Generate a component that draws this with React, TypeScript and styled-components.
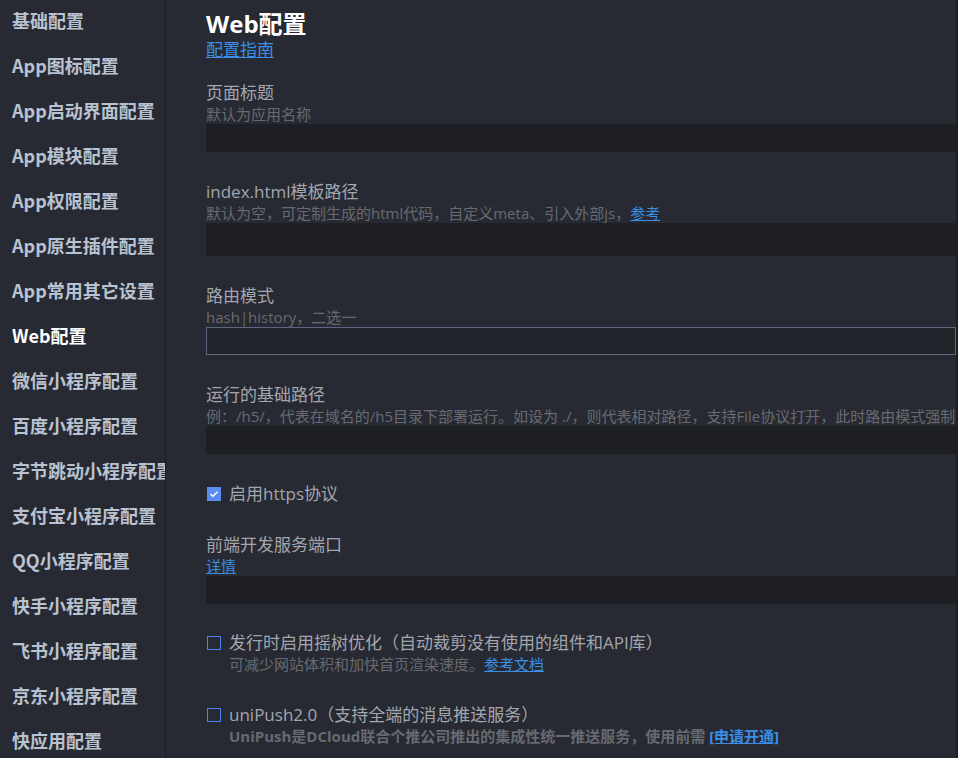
import React from "react";
import styled, { createGlobalStyle } from "styled-components";

const GlobalStyle = createGlobalStyle`
  html, body {
    margin: 0;
    padding: 0;
    background: #272a33;
    overflow: hidden;
  }
  body {
    font-family: "Open Sans", "Noto Sans CJK SC", sans-serif;
  }
  * { box-sizing: border-box; }
`;

const Page = styled.div`
  display: flex;
  width: 958px;
  height: 758px;
  background: #272a33;
  overflow: hidden;
`;

const Sidebar = styled.nav`
  flex: 0 0 166px;
  width: 166px;
  border-right: 1px solid #1b1d22;
  overflow: hidden;
  display: flex;
  flex-direction: column;
`;

const NavItem = styled.div<{ $active?: boolean }>`
  flex: 0 0 auto;
  height: 45px;
  line-height: 40px;
  padding-left: 12px;
  white-space: nowrap;
  font-size: 18px;
  font-weight: 700;
  font-family: "Noto Sans CJK SC", sans-serif;
  color: ${(p) => (p.$active ? "#ffffff" : "#b9c2d0")};
`;

const Main = styled.main`
  flex: 1 1 auto;
  min-width: 0;
  padding: 8px 0 0 40px;
  border-right: 2px solid #1d1f24;
  overflow: hidden;
  display: flex;
  flex-direction: column;
`;

const Title = styled.h1`
  margin: 0;
  font-size: 24px;
  line-height: 32px;
  font-weight: 700;
  color: #ffffff;
  font-family: "Open Sans", "Noto Sans CJK SC", sans-serif;
`;

const Link = styled.a<{ $size?: number }>`
  color: #3a8ee6;
  text-decoration: underline;
  font-size: ${(p) => p.$size ?? 15}px;
  cursor: pointer;
`;

const LinkLine = styled.div<{ $size?: number }>`
  line-height: 20px;
  height: 20px;
  font-size: ${(p) => p.$size ?? 15}px;
`;

const Section = styled.section<{ $gap?: number }>`
  margin-top: ${(p) => p.$gap ?? 29}px;
  display: flex;
  flex-direction: column;
`;

const Label = styled.div`
  font-size: 17px;
  line-height: 22px;
  height: 22px;
  color: #a3a6ad;
  white-space: nowrap;
`;

const Hint = styled.div<{ $bold?: boolean }>`
  font-size: 15px;
  line-height: 20px;
  height: 20px;
  color: #676a70;
  font-weight: ${(p) => (p.$bold ? 700 : 400)};
  white-space: nowrap;
  overflow: hidden;
`;

const Input = styled.div<{ $h?: number; $bordered?: boolean }>`
  height: ${(p) => p.$h ?? 28}px;
  background: ${(p) => (p.$bordered ? "#22242c" : "#1e1f24")};
  border: ${(p) => (p.$bordered ? "1px solid #5f6780" : "none")};
`;

const CheckRow = styled.label`
  display: flex;
  align-items: center;
  gap: 8px;
  height: 22px;
  font-size: 17px;
  line-height: 22px;
  color: #a3a6ad;
  white-space: nowrap;
`;

const Box = styled.span<{ $checked?: boolean }>`
  flex: 0 0 14px;
  width: 14px;
  height: 14px;
  margin-left: 1px;
  display: inline-flex;
  align-items: center;
  justify-content: center;
  background: ${(p) => (p.$checked ? "#5b8cf2" : "transparent")};
  border: ${(p) => (p.$checked ? "none" : "1.5px solid #4f82f0")};
`;

const Indented = styled.div`
  padding-left: 23px;
`;

const Check = () => (
  <svg width="10" height="8" viewBox="0 0 10 8">
    <path d="M1.5 4 L4 6.2 L8.5 1.8" fill="none" stroke="#ffffff" strokeWidth="1.5" />
  </svg>
);

const navItems = [
  "基础配置",
  "App图标配置",
  "App启动界面配置",
  "App模块配置",
  "App权限配置",
  "App原生插件配置",
  "App常用其它设置",
  "Web配置",
  "微信小程序配置",
  "百度小程序配置",
  "字节跳动小程序配置",
  "支付宝小程序配置",
  "QQ小程序配置",
  "快手小程序配置",
  "飞书小程序配置",
  "京东小程序配置",
  "快应用配置",
];

export default function App() {
  return (
    <>
      <GlobalStyle />
      <Page>
        <Sidebar>
          {navItems.map((n) => (
            <NavItem key={n} $active={n === "Web配置"}>
              {n}
            </NavItem>
          ))}
        </Sidebar>
        <Main>
          <Title>Web配置</Title>
          <LinkLine $size={17}>
            <Link $size={17}>配置指南</Link>
          </LinkLine>

          <Section $gap={22}>
            <Label>页面标题</Label>
            <Hint>默认为应用名称</Hint>
            <Input />
          </Section>

          <Section>
            <Label>index.html模板路径</Label>
            <Hint>
              默认为空，可定制生成的html代码，自定义meta、引入外部js，<Link>参考</Link>
            </Hint>
            <Input $h={33} />
          </Section>

          <Section>
            <Label>路由模式</Label>
            <Hint>hash|history，二选一</Hint>
            <Input $bordered />
          </Section>

          <Section>
            <Label>运行的基础路径</Label>
            <Hint>
              例：/h5/，代表在域名的/h5目录下部署运行。如设为 ./，则代表相对路径，支持File协议打开，此时路由模式强制为hash模式。
            </Hint>
            <Input />
          </Section>

          <Section>
            <CheckRow>
              <Box $checked>
                <Check />
              </Box>
              启用https协议
            </CheckRow>
          </Section>

          <Section>
            <Label>前端开发服务端口</Label>
            <LinkLine>
              <Link>详情</Link>
            </LinkLine>
            <Input />
          </Section>

          <Section $gap={28}>
            <CheckRow>
              <Box />
              发行时启用摇树优化（自动裁剪没有使用的组件和API库）
            </CheckRow>
            <Indented>
              <Hint>
                可减少网站体积和加快首页渲染速度。<Link>参考文档</Link>
              </Hint>
            </Indented>
          </Section>

          <Section $gap={30}>
            <CheckRow>
              <Box />
              uniPush2.0（支持全端的消息推送服务）
            </CheckRow>
            <Indented>
              <Hint $bold>
                UniPush是DCloud联合个推公司推出的集成性统一推送服务，使用前需 <Link>[申请开通]</Link>
              </Hint>
            </Indented>
          </Section>
        </Main>
      </Page>
    </>
  );
}
